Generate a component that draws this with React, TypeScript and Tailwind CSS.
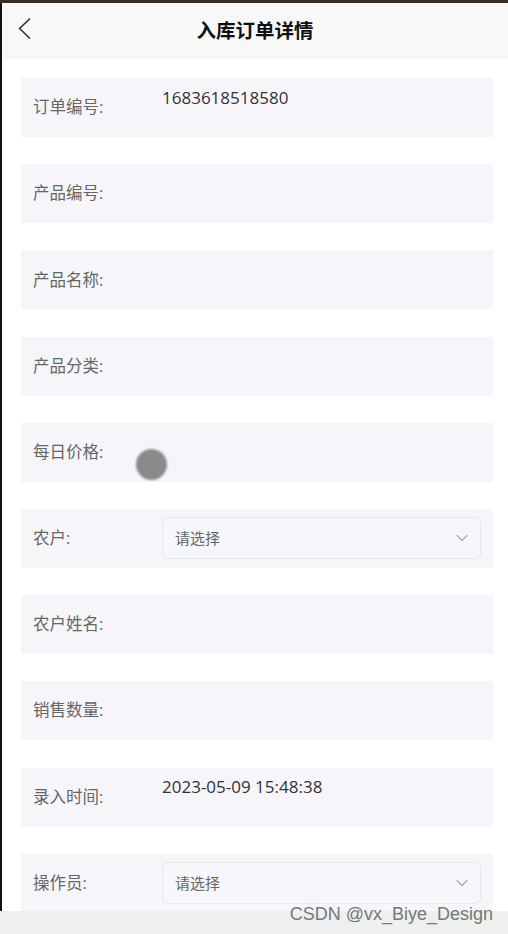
import { ChevronDown } from "lucide-react"

type Field = {
  label: string
  value?: string
  select?: boolean
}

const fields: Field[] = [
  { label: "订单编号:", value: "1683618518580" },
  { label: "产品编号:" },
  { label: "产品名称:" },
  { label: "产品分类:" },
  { label: "每日价格:" },
  { label: "农户:", select: true },
  { label: "农户姓名:" },
  { label: "销售数量:" },
  { label: "录入时间:", value: "2023-05-09 15:48:38" },
  { label: "操作员:", select: true },
]

const Row = ({ field, dot }: { field: Field; dot?: boolean }) => (
  <div className="relative flex h-[59px] items-center bg-[#f6f6fa] pl-3 pr-3">
    <span className="w-[129px] shrink-0 text-[16.5px] text-[#666]">{field.label}</span>
    {field.value && (
      <span className="-mt-[20px] text-[17px] text-[#333]">{field.value}</span>
    )}
    {field.select && (
      <div className="flex h-[42px] flex-1 items-center justify-between rounded-md border border-[#e8e8ec] bg-[#f6f7fa] pl-3 pr-2">
        <span className="text-[15px] text-[#666]">请选择</span>
        <ChevronDown size={20} strokeWidth={1.4} className="text-[#aaa]" />
      </div>
    )}
    {dot && (
      <div className="absolute left-[115px] top-[26px] h-[31px] w-[31px] rounded-full bg-[#8a8a8a] blur-[1px]" />
    )}
  </div>
)

export default function App() {
  return (
    <div
      className="flex h-[934px] w-[508px] flex-col overflow-hidden bg-white"
      style={{ fontFamily: '"Open Sans", "Noto Sans CJK SC", sans-serif' }}
    >
      <div className="h-[3px] shrink-0 bg-[#3a2e26]" />
      <div className="flex flex-1 overflow-hidden">
        <div className="w-[2px] shrink-0 bg-[#111]" />
        <div className="flex flex-1 flex-col">
          <div className="relative flex h-[56px] shrink-0 items-center justify-center bg-[#f8f8f8]">
            <svg
              className="absolute left-[16px] top-[15px]"
              width="13"
              height="21"
              viewBox="0 0 13 21"
              fill="none"
              stroke="#333"
              strokeWidth="1.7"
              strokeLinecap="round"
              strokeLinejoin="round"
            >
              <polyline points="11.5,1 1.5,10.5 11.5,20" />
            </svg>
            <span className="text-[19.5px] font-bold text-[#111]">入库订单详情</span>
          </div>
          <div className="flex flex-col gap-[27.2px] pl-[19px] pr-[15px] pt-[19px]">
            {fields.map((f, i) => (
              <Row key={f.label} field={f} dot={i === 4} />
            ))}
          </div>
        </div>
      </div>
      <div className="relative h-[23px] shrink-0 bg-[#eef0ef]">
        <span className="absolute right-[15px] top-[-10px] text-[18px] text-[#777]" style={{ fontFamily: '"Liberation Sans", sans-serif' }}>
          CSDN @vx_Biye_Design
        </span>
      </div>
    </div>
  )
}
